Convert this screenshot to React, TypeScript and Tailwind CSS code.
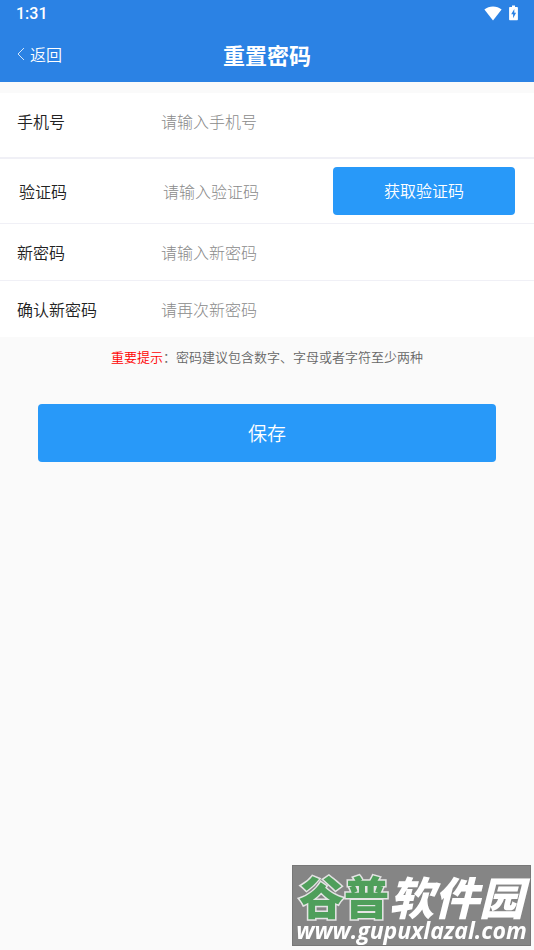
import { useState } from "react";

const fields = [
  {
    id: "phone",
    label: "手机号",
    placeholder: "请输入手机号",
    type: "tel",
    row: "px-[17px] pt-2 pb-4 border-b-2",
  },
  {
    id: "code",
    label: "验证码",
    placeholder: "请输入验证码",
    type: "text",
    row: "px-[19px] py-2 border-b",
    action: "获取验证码",
  },
  {
    id: "password",
    label: "新密码",
    placeholder: "请输入新密码",
    type: "password",
    row: "px-[17px] py-2 border-b",
  },
  {
    id: "confirm",
    label: "确认新密码",
    placeholder: "请再次新密码",
    type: "password",
    row: "px-[17px] py-2",
  },
];

const StatusBar = () => (
  <div className="flex h-7 items-center justify-between pl-4 pr-4">
    <span className="font-['Roboto',sans-serif] text-base font-medium leading-7">1:31</span>
    <div className="flex items-center gap-[7px] pb-[2px]">
      <svg width="18" height="15" viewBox="0 0 18 15" fill="currentColor" aria-hidden="true">
        <path d="M0.4 3.6C2.8 1.6 5.7 0.6 9 0.6s6.2 1 8.6 3L9 14.4z" />
      </svg>
      <svg width="9" height="16" viewBox="0 0 9 16" aria-hidden="true">
        <path fill="currentColor" d="M3 0.5h3v1.4h1.9c.6 0 1 .4 1 1v11.3c0 .6-.4 1-1 1H1.1c-.6 0-1-.4-1-1V2.9c0-.6.4-1 1-1H3z" />
        <path fill="#2b82e4" d="M5.3 3.9 2.2 9.2h1.9v4l3-5.4H5.3z" />
      </svg>
    </div>
  </div>
);

const Header = () => (
  <header className="bg-[#2b82e4] text-white">
    <StatusBar />
    <div className="grid h-[54px] grid-cols-[1fr_auto_1fr] items-center px-4 pb-[2px]">
      <a href="#back" className="flex items-center gap-1 text-base font-[350]">
        <svg width="10" height="14" viewBox="0 0 10 14" fill="none" stroke="currentColor" strokeOpacity="0.8" aria-hidden="true">
          <path d="M8 1 2 7l6 6" />
        </svg>
        返回
      </a>
      <h1 className="text-[22px] font-bold">重置密码</h1>
    </div>
  </header>
);

const Watermark = () => (
  <div className="fixed bottom-1 right-[3px] flex h-[81px] w-[239px] flex-col items-center border border-[#777] bg-[#858585] text-white">
    <div className="mt-2 whitespace-nowrap text-[45px] font-black leading-[44px]">
      <span className="text-[#4f9f5b] [-webkit-text-stroke:3px_#e4e4e4] [paint-order:stroke_fill]">谷普</span>
      <span className="italic">软件园</span>
    </div>
    <div className="whitespace-nowrap font-['Open_Sans',sans-serif] text-[23px] font-bold italic leading-6">
      www.gupuxlazal.com
    </div>
  </div>
);

export default function App() {
  const [values, setValues] = useState<Record<string, string>>({});

  return (
    <div className="min-h-screen bg-[#fafafa] font-['Noto_Sans_CJK_SC',sans-serif]">
      <Header />
      <form onSubmit={(e) => e.preventDefault()}>
        <div className="mt-[11px] bg-white">
          {fields.map((field) => (
            <div key={field.id} className={`flex items-center border-[#f0f0f6] ${field.row}`}>
              <label htmlFor={field.id} className="w-36 shrink-0 text-base font-[350] text-[#222]">
                {field.label}
              </label>
              <input
                id={field.id}
                type={field.type}
                placeholder={field.placeholder}
                value={values[field.id] ?? ""}
                onChange={(e) => setValues({ ...values, [field.id]: e.target.value })}
                className="h-10 min-w-0 flex-1 text-base font-light text-[#333] outline-none placeholder:text-[#8a8a8a]"
              />
              {field.action && (
                <button type="button" className="h-12 w-[182px] shrink-0 rounded bg-[#2899f9] pb-[2px] text-base font-[350] text-white">
                  {field.action}
                </button>
              )}
            </div>
          ))}
        </div>
        <p className="mt-[10px] text-center text-[13px] font-[350] leading-5 text-[#666]">
          <span className="text-[#f00]">重要提示</span>：密码建议包含数字、字母或者字符至少两种
        </p>
        <div className="mt-[37px] px-[38px]">
          <button type="submit" className="h-[58px] w-full rounded bg-[#2899f9] text-[19px] font-[350] text-white">
            保存
          </button>
        </div>
      </form>
      <Watermark />
    </div>
  );
}
